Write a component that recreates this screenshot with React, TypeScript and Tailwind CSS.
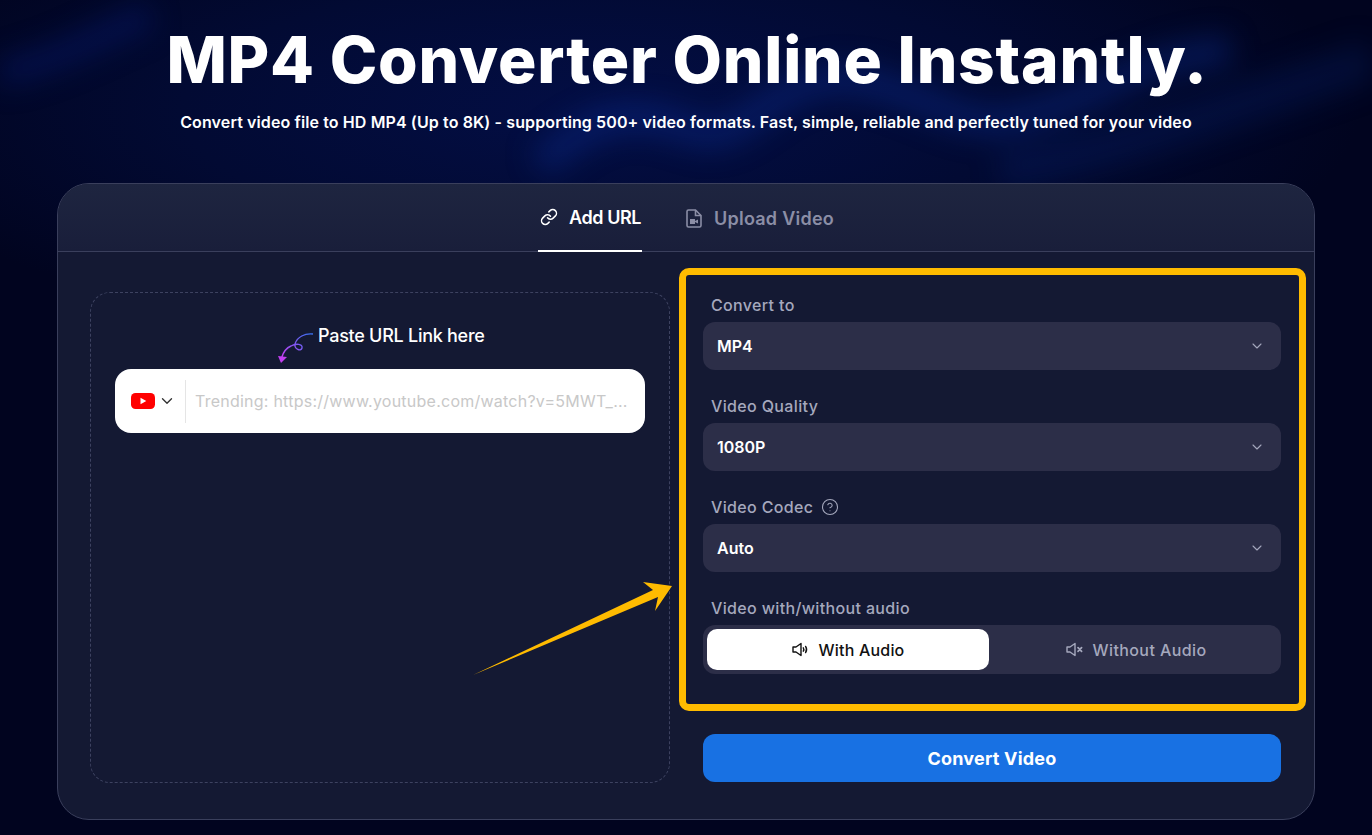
import { ChevronDown, CircleHelp, Link } from "lucide-react";

function Speaker({ muted }: { muted?: boolean }) {
  return (
    <svg width="17" height="15" viewBox="0 0 17 15" fill="none" stroke="currentColor" strokeWidth="1.4" strokeLinejoin="round" strokeLinecap="round">
      <path d="M1 5h3l5-3.500v12L4 10H1z" />
      {muted ? (
        <path d="M12 5.600l3.600 3.800M15.600 5.600L12 9.400" strokeWidth="1.700" />
      ) : (
        <>
          <path d="M11.300 5.800c.6.9.6 2.500 0 3.400" />
          <path d="M13.600 4.400c1.100 1.700 1.100 4.500 0 6.200" />
        </>
      )}
    </svg>
  );
}

function SelectField({ label, value, help }: { label: string; value: string; help?: boolean }) {
  return (
    <div className="mb-[23px]">
      <div className="mb-1 flex h-[26px] items-center gap-2 pl-2 text-[16px] font-medium tracking-[0.35px] text-[#a5a8bd]">
        {label}
        {help ? <CircleHelp size={18} strokeWidth={1.4} /> : null}
      </div>
      <div className="flex h-12 items-center justify-between rounded-xl bg-[#2c2e48] pl-[14px] pr-4 text-[16px] font-semibold text-white">
        {value}
        <ChevronDown size={16} strokeWidth={1.6} className="text-[#a5a8bd]" />
      </div>
    </div>
  );
}

export default function App() {
  return (
    <div className="relative h-[835px] overflow-hidden bg-[#01041f] font-['Inter',sans-serif]">
      {/* background glow + waves */}
      <div className="absolute inset-0 bg-[radial-gradient(ellipse_760px_240px_at_600px_110px,#030e45_0%,#020a33_55%,transparent_100%)]" />
      <svg className="absolute left-0 top-0 blur-[14px]" width="1372" height="260" viewBox="0 0 1372 260" fill="none" aria-hidden>
        <path d="M-10 75C50 65 90 40 150 15" stroke="#06186a" strokeWidth="26" opacity=".5" />
        <path d="M540 165C600 110 640 110 690 130C740 150 760 90 830 80C900 75 950 130 1010 120C1100 100 1130 60 1230 50" stroke="#0a2a8c" strokeWidth="30" opacity=".42" />
        <path d="M1000 170C1080 160 1200 120 1372 60" stroke="#07206e" strokeWidth="40" opacity=".3" />
      </svg>

      <div className="relative px-[57px] pt-[22px]">
        <h1 className="whitespace-nowrap pl-[2px] text-center text-[64px] font-extrabold leading-[76px] tracking-[0.8px] text-white">MP4 Converter Online Instantly.</h1>
        <p className="mt-3 whitespace-nowrap text-center text-[16px] font-semibold leading-6 tracking-[0.11px] text-white">
          Convert video file to HD MP4 (Up to 8K) - supporting 500+ video formats. Fast, simple, reliable and perfectly tuned for your video
        </p>

        <div className="mt-[49px] h-[637px] w-[1258px] overflow-hidden rounded-[32px] border border-[#3a3f5c] bg-[#141933]">
          <div className="flex h-[68px] justify-center gap-[44px] border-b border-[#3a3f5c] bg-[linear-gradient(180deg,#1e2540,#191e3a)]">
            <div className="flex h-[68px] w-[104px] items-center gap-[11px] whitespace-nowrap border-b-2 border-white pl-[2px] text-[18px] font-semibold tracking-[-0.4px] text-white">
              <Link size={18} strokeWidth={2} className="shrink-0" />
              Add URL
            </div>
            <div className="flex h-[68px] items-center gap-[12px] whitespace-nowrap text-[18px] font-semibold tracking-[0.25px] text-[#8b8ea6]">
              <svg width="16" height="19" viewBox="0 0 16 19" fill="none" className="shrink-0">
                <path d="M2.500 1h7L15 6.500V16.500a1.500 1.500 0 0 1-1.500 1.500h-11A1.500 1.500 0 0 1 1 16.500v-14A1.500 1.500 0 0 1 2.500 1z" stroke="currentColor" strokeWidth="1.600" />
                <path d="M9.500 1v5.500H15" stroke="currentColor" strokeWidth="1.600" />
                <path d="M4 10h5v5H4zM9 12l3-1.500v4L9 13z" fill="currentColor" />
              </svg>
              Upload Video
            </div>
          </div>

          <div className="relative flex pl-[32px] pt-[40px]">
            <div className="h-[491px] w-[580px] rounded-[20px] border border-dashed border-[#3d4260] px-6 pt-[30px]">
              <div className="relative flex h-[24px] items-center pl-[203px] text-[18px] font-medium tracking-[-0.27px] text-white">
                <svg className="absolute left-[162px] top-[5px]" width="38" height="36" viewBox="0 0 38 36" fill="none">
                  <defs>
                    <linearGradient id="sq" x1="34" y1="6" x2="6" y2="30" gradientUnits="userSpaceOnUse">
                      <stop stopColor="#3a6ff0" />
                      <stop offset="1" stopColor="#c23ff0" />
                    </linearGradient>
                  </defs>
                  <path d="M36 6C28 5 20 9 18 16C17 21 24 24 25 20C26 16 19 15 14 18C9 20 6 25 4.500 30" stroke="url(#sq)" strokeWidth="1.400" />
                  <path d="M1 28l9 1-6 6z" fill="#c23ff0" />
                </svg>
                Paste URL Link here
              </div>
              <div className="mt-[22px] flex h-16 w-[530px] items-center rounded-2xl bg-white">
                <div className="flex h-[43px] w-[71px] items-center gap-[3px] border-r border-[#e5e5e5] pl-4">
                  <svg width="24" height="16" viewBox="0 0 24 16" className="shrink-0">
                    <rect width="24" height="16" rx="4.500" fill="#ff0000" />
                    <path d="M9.500 4.700v6.600l5.800-3.300z" fill="#fff" />
                  </svg>
                  <ChevronDown size={18} strokeWidth={1.8} className="shrink-0 text-[#333]" />
                </div>
                <span className="ml-[9px] whitespace-nowrap text-[16px] tracking-[0.24px] text-[#c8c8c8]">Trending: https://www.youtube.com/watch?v=5MWT_...</span>
              </div>
            </div>

            <svg className="absolute left-[414px] top-[330px]" width="202" height="96" viewBox="0 0 202 96" aria-hidden>
              <path d="M1 93L181 8L171 0L200 4L183 29L186 15Z" fill="#ffbb00" />
            </svg>

            <div className="relative ml-[33px] w-[578px]">
              <div className="absolute left-[-24px] top-[-24px] h-[443px] w-[627px] rounded-[10px] border-[7px] border-[#ffbb00]" />
              <SelectField label="Convert to" value="MP4" />
              <SelectField label="Video Quality" value="1080P" />
              <SelectField label="Video Codec" value="Auto" help />
              <div className="mb-1 flex h-[26px] items-center pl-2 text-[16px] font-medium tracking-[0.35px] text-[#a5a8bd]">Video with/without audio</div>
              <div className="flex h-[49px] rounded-xl bg-[#2c2e48] p-1">
                <div className="flex w-[282px] items-center justify-center gap-[10px] rounded-[10px] bg-white text-[16px] font-medium tracking-[0.2px] text-[#111]">
                  <Speaker />
                  With Audio
                </div>
                <div className="flex flex-1 items-center justify-center gap-[10px] pl-[6px] text-[16px] font-medium tracking-[0.4px] text-[#a5a8bd]">
                  <Speaker muted />
                  Without Audio
                </div>
              </div>
              <div className="mt-[60px] flex h-12 items-center justify-center rounded-xl bg-[#1871e3] text-[18px] font-bold tracking-[0.2px] text-white">Convert Video</div>
            </div>
          </div>
        </div>
      </div>
    </div>
  );
}
